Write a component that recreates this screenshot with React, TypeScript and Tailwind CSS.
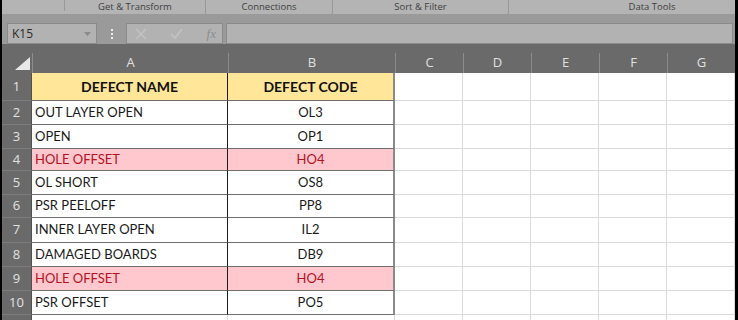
import React from "react";

const rows: { n: number; name: string; code: string; h: string; bad?: boolean }[] = [
  { n: 2, name: "OUT LAYER OPEN", code: "OL3", h: "h-[24px]" },
  { n: 3, name: "OPEN", code: "OP1", h: "h-[24px]" },
  { n: 4, name: "HOLE OFFSET", code: "HO4", h: "h-[22px]", bad: true },
  { n: 5, name: "OL SHORT", code: "OS8", h: "h-[24px]" },
  { n: 6, name: "PSR PEELOFF", code: "PP8", h: "h-[23px]" },
  { n: 7, name: "INNER LAYER OPEN", code: "IL2", h: "h-[25px]" },
  { n: 8, name: "DAMAGED BOARDS", code: "DB9", h: "h-[24px]" },
  { n: 9, name: "HOLE OFFSET", code: "HO4", h: "h-[24px]", bad: true },
  { n: 10, name: "PSR OFFSET", code: "PO5", h: "h-[24px]" },
];

const emptyCols = ["C", "D", "E", "F", "G"];

const RowHead = ({ n, h }: { n: number | string; h: string }) => (
  <div
    className={`${h} w-[30px] shrink-0 bg-[#6a6a6a] border-b border-[#7d7d7d] border-r border-r-[#505050] flex items-center justify-center text-[13px] text-[#e2e2e2] font-['Open_Sans',sans-serif]`}
  >
    {n}
  </div>
);

const EmptyCells = () => (
  <>
    {emptyCols.map((c) => (
      <div key={c} className="w-[68px] shrink-0 bg-white border-r border-b border-[#dadada]" />
    ))}
  </>
);

export default function App() {
  return (
    <div className="w-[738px] h-[320px] overflow-hidden bg-black flex font-['Lato',sans-serif]">
      <div className="w-[2px] shrink-0" />
      <div className="w-[733px] shrink-0 flex flex-col overflow-hidden">
        {/* ribbon group labels */}
        <div className="h-[14px] shrink-0 bg-[#b4b4b4] flex text-[9.5px] leading-[14px] text-[#404040] font-['Open_Sans',sans-serif]">
          <div className="w-[63px] h-[11px] border-r border-[#999]" />
          <div className="w-[141px] border-r border-[#999] text-center">Get &amp; Transform</div>
          <div className="w-[127px] border-r border-[#999] text-center">Connections</div>
          <div className="w-[176px] border-r border-[#999] text-center">Sort &amp; Filter</div>
          <div className="flex-1 text-center pl-[60px]">Data Tools</div>
        </div>

        {/* formula bar */}
        <div className="h-[30px] shrink-0 bg-[#9a9a9a] flex items-start pt-[9px] font-['Open_Sans',sans-serif]">
          <div className="ml-[5px] w-[90px] h-[21px] bg-[#b2b2b2] border border-[#8a8a8a] flex items-center justify-between px-[4px]">
            <span className="text-[12px] text-[#2a2a2a]">K15</span>
            <svg width="7" height="4" viewBox="0 0 7 4" className="mr-[1px]">
              <path d="M0 0h7L3.5 4z" fill="#8a8a8a" />
            </svg>
          </div>
          <div className="w-[29px] h-[21px] flex flex-col items-center justify-center gap-[2px]">
            <div className="w-[2px] h-[2px] bg-[#eee]" />
            <div className="w-[2px] h-[2px] bg-[#eee]" />
            <div className="w-[2px] h-[2px] bg-[#eee]" />
          </div>
          <div className="w-[97px] h-[21px] bg-[#b2b2b2] border border-[#8a8a8a] flex items-center px-[8px] justify-between">
            <svg width="12" height="12" viewBox="0 0 12 12">
              <path d="M1 1l10 10M11 1L1 11" stroke="#c4c4c4" strokeWidth="1.3" />
            </svg>
            <svg width="13" height="11" viewBox="0 0 13 11">
              <path d="M1 6l4 4 7-9" stroke="#c4c4c4" strokeWidth="1.4" fill="none" />
            </svg>
            <span className="font-['Liberation_Serif',serif] italic text-[13px] text-[#8c8c8c] mr-[-2px]">fx</span>
          </div>
          <div className="ml-[3px] flex-1 mr-[2px] h-[21px] bg-[#b2b2b2] border border-[#8a8a8a]" />
        </div>

        {/* column headers */}
        <div className="h-[29px] shrink-0 bg-[#6a6a6a] flex items-end font-['Open_Sans',sans-serif] text-[13px] text-[#e0e0e0]">
          <div className="w-[30px] h-[20px] flex items-end justify-end pr-[2px] pb-[3px]">
            <svg width="15" height="13" viewBox="0 0 15 13">
              <path d="M15 0V13H0z" fill="#e8e8e8" />
            </svg>
          </div>
          <div className="w-[196px] h-[20px] border-l border-[#8c8c8c] flex items-center justify-center">A</div>
          <div className="w-[167px] h-[20px] border-l border-[#8c8c8c] flex items-center justify-center">B</div>
          {emptyCols.map((c) => (
            <div key={c} className="w-[68px] h-[20px] border-l border-[#8c8c8c] flex items-center justify-center">
              {c}
            </div>
          ))}
        </div>

        {/* header row 1 */}
        <div className="flex shrink-0 h-[28px]">
          <RowHead n={1} h="h-[28px]" />
          <div className="w-[196px] shrink-0 bg-[#ffe699] border-r border-[#1c1c1c] border-b border-b-[#6e6e6e] flex items-center justify-center font-bold text-[14px] text-[#111]">
            DEFECT NAME
          </div>
          <div className="w-[167px] shrink-0 bg-[#ffe699] border-r-2 border-[#8a8a8a] border-b border-b-[#6e6e6e] flex items-center justify-center font-bold text-[14px] text-[#111]">
            DEFECT CODE
          </div>
          <EmptyCells />
        </div>

        {rows.map((r) => (
          <div key={r.n} className={`flex shrink-0 ${r.h}`}>
            <RowHead n={r.n} h={r.h} />
            <div
              className={`w-[196px] shrink-0 border-r border-[#1c1c1c] border-b border-b-[#6e6e6e] flex items-center pl-[3px] text-[13px] ${
                r.bad ? "bg-[#ffc7ce] text-[#b3141f]" : "bg-white text-[#1a1a1a]"
              }`}
            >
              {r.name}
            </div>
            <div
              className={`w-[167px] shrink-0 border-r-2 border-[#8a8a8a] border-b border-b-[#6e6e6e] flex items-center justify-center text-[13px] ${
                r.bad ? "bg-[#ffc7ce] text-[#b3141f]" : "bg-white text-[#1a1a1a]"
              }`}
            >
              {r.code}
            </div>
            <EmptyCells />
          </div>
        ))}

        {/* partly visible row 11 */}
        <div className="flex shrink-0 h-[24px]">
          <div className="w-[30px] shrink-0 bg-[#6a6a6a] border-r border-[#505050]" />
          <div className="w-[196px] shrink-0 bg-white border-r border-[#dadada]" />
          <div className="w-[167px] shrink-0 bg-white border-r border-[#dadada]" />
          <EmptyCells />
        </div>
      </div>
      <div className="w-[3px] shrink-0" />
    </div>
  );
}
